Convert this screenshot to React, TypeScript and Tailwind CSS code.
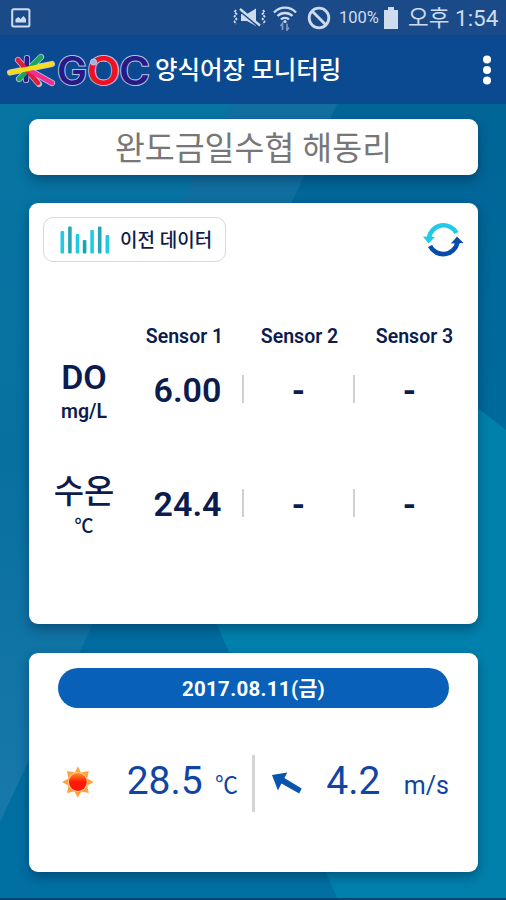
const navy = "text-[#0c1c4e]";

const bars = [
    { id: 1, x: 0, top: 5, color: "#20cbe6" },
    { id: 2, x: 7.6, top: 0.5, color: "#23a9b8" },
    { id: 3, x: 15.2, top: 8, color: "#20cbe6" },
    { id: 4, x: 22.3, top: 14, color: "#16a4b3" },
    { id: 5, x: 29.8, top: 4, color: "#20cbe6" },
    { id: 6, x: 37.4, top: 0.5, color: "#23a9b8" },
    { id: 7, x: 45, top: 9, color: "#20cbe6" }
];

const readings = [
    { id: "do", name: "DO", unit: "mg/L", values: ["6.00", "-", "-"] },
    { id: "temp", name: "수온", unit: "℃", values: ["24.4", "-", "-"] }
];

function Backdrop() {
    return (
        <svg className="absolute inset-0 -z-10" width="506" height="900" viewBox="0 0 506 900">
            <defs>
                <linearGradient id="left" x1="0" y1="0" x2="0" y2="1">
                    <stop offset="0" stopColor="#0775a3" />
                    <stop offset="0.5" stopColor="#08709f" />
                    <stop offset="1" stopColor="#1878aa" />
                </linearGradient>
                <linearGradient id="right" x1="0" y1="0" x2="0" y2="1">
                    <stop offset="0" stopColor="#006496" />
                    <stop offset="1" stopColor="#0070a3" />
                </linearGradient>
            </defs>
            <rect width="506" height="900" fill="url(#right)" />
            <path d="M0 104H337L0 822Z" fill="url(#left)" />
            <path d="M232 104H337L293 200L247 298H130Z" fill="#116fa0" />
            <path d="M478 408L506 430V900H338L217 625L160 500Z" fill="#0081ac" />
            <rect y="898" width="506" height="2" fill="#07466f" />
        </svg>
    );
}

function StatusBar() {
    return (
        <div className="flex h-[35px] items-center bg-[#1a4b88] pl-[11px] pr-2 text-[#cfdbee]">
            <svg width="20" height="20" viewBox="0 0 20 20">
                <rect x="1.2" y="1.2" width="17.2" height="17.2" rx="1.5" fill="none" stroke="currentColor" strokeWidth="2" />
                <path d="M4.5 14.5V11L7.5 9L9.5 11L12.5 8L15 11V14.5Z" fill="currentColor" />
            </svg>
            <svg className="ml-auto" width="34" height="22" viewBox="0 0 34 22">
                <path d="M3 3L1.5 5L3.5 7L1.5 9.5L3.5 12L1.5 14.5L3 17M30 3L31.5 5L29.5 7L31.5 9.5L29.5 12L31.5 14.5L30 17" fill="none" stroke="currentColor" strokeWidth="1.8" strokeDasharray="2.5 1" />
                <path d="M8 7H14L23 1.5V19L14 14H8Z" fill="currentColor" />
                <path d="M7 4L26 20" stroke="#1a4b88" strokeWidth="2" />
                <path d="M7 2L27 18.5" stroke="currentColor" strokeWidth="2.4" />
            </svg>
            <svg className="ml-[6px]" width="24" height="26" viewBox="0 0 24 26">
                <path d="M1 7.5C7 1 17 1 23 7.5M4.5 11C8.5 7 15.5 7 19.5 11M8 14.5C10 12.2 14 12.2 16 14.5" fill="none" stroke="currentColor" strokeWidth="2.3" />
                <circle cx="12" cy="16.5" r="1.6" fill="currentColor" />
                <path d="M9.5 25V18.5L7.5 21M14 18.5V25L16 22.5" fill="none" stroke="#7e9bc3" strokeWidth="1.7" />
            </svg>
            <svg className="ml-[10px]" width="24" height="24" viewBox="0 0 24 24">
                <circle cx="12" cy="12" r="9.8" fill="none" stroke="currentColor" strokeWidth="2.8" />
                <path d="M5 5L19 19" stroke="currentColor" strokeWidth="2.8" />
            </svg>
            <span className="ml-2 w-[41px] pt-[2px] text-[16.5px]">100%</span>
            <svg className="ml-[3px]" width="16" height="22" viewBox="0 0 16 22">
                <path d="M1 3H5V0H11V3H15V22H1Z" fill="currentColor" />
            </svg>
            <span className="ml-[9px] w-[90px] whitespace-nowrap pt-px text-[22.5px] leading-none">오후 1:54</span>
        </div>
    );
}

function Logo() {
    return (
        <div className="flex h-[42px] w-[143px] items-center">
            <svg width="50" height="40" viewBox="0 0 50 40" className="shrink-0">
                <g strokeLinecap="round" strokeWidth="6.2" stroke="#b9c0e2">
                    <path d="M20 8L19 30M34 7L12 29M11 10L32 34M45 33L22 20M3 22.5L45 14" />
                </g>
                <g strokeLinecap="round" strokeWidth="4.6">
                    <path d="M20 8L19 30" stroke="#2a1b86" />
                    <path d="M34 7L12 29" stroke="#1aa55a" />
                    <path d="M11 10L31 33" stroke="#e51b3c" />
                    <path d="M45 33L22 20" stroke="#ef2e92" />
                    <path d="M3 22.5L45 14" stroke="#f8dc1c" />
                </g>
            </svg>
            <svg width="93" height="42" viewBox="0 0 93 42" className="shrink-0 overflow-visible">
                <g fontFamily="Inter, sans-serif" fontSize="39" fontWeight="600" stroke="#b9bfe6" strokeWidth="2" paintOrder="stroke">
                    <text x="0" y="35.5" textLength="30" lengthAdjust="spacingAndGlyphs" fill="#261a85">G</text>
                    <text x="62" y="35.5" textLength="31" lengthAdjust="spacingAndGlyphs" fill="#261a85">C</text>
                    <text x="30" y="35.5" textLength="33" lengthAdjust="spacingAndGlyphs" fill="#f01021">O</text>
                </g>
                <circle cx="36.5" cy="13" r="3" fill="#9db2df" stroke="#c8d0ef" />
            </svg>
        </div>
    );
}

function Header() {
    return (
        <header className="flex h-[69px] items-center bg-[#0b4990] pl-[7px] pr-[14px]">
            <Logo />
            <h1 className="ml-[5px] whitespace-nowrap pt-[3px] text-[24.5px] font-medium text-white">양식어장 모니터링</h1>
            <svg className="ml-auto" width="10" height="30" viewBox="0 0 10 30" fill="#fff">
                <circle cx="5" cy="4.5" r="4" />
                <circle cx="5" cy="15" r="4" />
                <circle cx="5" cy="25.5" r="4" />
            </svg>
        </header>
    );
}

function SensorCard() {
    return (
        <section className="mt-7 h-[421px] rounded-[9px] bg-white px-[14px] pt-[14px] shadow-[0_5px_12px_rgba(0,25,60,0.4)]">
            <div className="flex justify-between">
                <button className="flex h-[45px] w-[183px] items-center rounded-[10px] border-[1.5px] border-[#d9d9dc] pl-[16px]">
                    <svg width="50" height="28" viewBox="0 0 50 28">
                        {bars.map((bar) => (
                            <rect key={bar.id} x={bar.x + 0.5} y={bar.top} width="3.6" height={27.5 - bar.top} rx="1" fill={bar.color} />
                        ))}
                    </svg>
                    <span className={`ml-[10px] whitespace-nowrap pt-[3px] text-[19px] font-medium ${navy}`}>이전 데이터</span>
                </button>
                <svg className="mt-1" width="42" height="38" viewBox="0 0 42 38">
                    <path d="M7 17A14.7 14.7 0 0 1 34.5 12" fill="none" stroke="#20cbe6" strokeWidth="4.6" />
                    <path d="M1 15.5L13 16L6.5 22.5Z" fill="#20cbe6" />
                    <path d="M8 25A14.7 14.7 0 0 0 35.5 21.5" fill="none" stroke="#084bab" strokeWidth="4.6" />
                    <path d="M29 22.5L35 15.5L41.5 22Z" fill="#084bab" />
                </svg>
            </div>

            <div className={`ml-[84px] mt-[63px] grid w-[345px] grid-cols-3 text-center text-[19.5px] font-semibold leading-6 ${navy}`}>
                <span>Sensor 1</span>
                <span>Sensor 2</span>
                <span>Sensor 3</span>
            </div>

            <div className="mt-[3px]">
                {readings.map((row) => (
                    <div key={row.id} className={`flex h-[114px] ${navy}`}>
                        <div className="w-[84px] text-center font-medium">
                            <div className={row.id === "do" ? "mt-[5px] h-10 text-[34px] font-semibold leading-10" : "mt-[6px] h-10 text-[33px] leading-10"}>{row.name}</div>
                            <div className={row.id === "do" ? "text-[19.5px] font-semibold leading-[30px]" : "text-[19px] leading-[30px]"}>{row.unit}</div>
                        </div>
                        <div className="mt-[13px] flex h-[50px] items-center">
                            <span className="w-[117px] pl-2 text-center text-[34px] font-semibold leading-none">{row.values[0]}</span>
                            <span className="mb-[2px] h-7 w-[2px] bg-[#d0d0d0]"></span>
                            <span className="flex w-[109px] justify-center text-[34px] font-bold leading-none">{row.values[1]}</span>
                            <span className="mb-[2px] h-7 w-[2px] bg-[#d0d0d0]"></span>
                            <span className="flex w-[109px] justify-center text-[34px] font-bold leading-none">{row.values[2]}</span>
                        </div>
                    </div>
                ))}
            </div>
        </section>
    );
}

function WeatherCard() {
    return (
        <section className="mt-[29px] h-[219px] rounded-[9px] bg-white px-[29px] pt-[15px] shadow-[0_5px_12px_rgba(0,25,60,0.4)]">
            <div className="flex h-10 items-center justify-center rounded-full bg-[#0860b9] pt-[2px] text-[20.5px] font-bold tracking-[0.3px] text-white">
                <span>2017.08.11(금)</span>
            </div>
            <div className="mt-[47px] flex h-[57px] items-center whitespace-nowrap text-[#1044a5]">
                <svg className="-mt-[3px] ml-1" width="32" height="32" viewBox="0 0 32 32">
                    <defs>
                        <linearGradient id="sun" x1="0" y1="0" x2="0" y2="1">
                            <stop offset="0" stopColor="#ff9022" />
                            <stop offset="0.5" stopColor="#ff1808" />
                            <stop offset="1" stopColor="#ff1a08" />
                        </linearGradient>
                    </defs>
                    <path d="M16 0L19 6.5L27 5L25.5 12.5L32 16L25.5 19.5L27 27L19.5 25.5L16 32L12.5 25.5L5 27L6.5 19.5L0 16L6.5 12.5L5 5L13 6.5Z" fill="#ffa43c" />
                    <circle cx="16" cy="16" r="10" fill="#ffc98a" />
                    <circle cx="16" cy="16" r="9" fill="url(#sun)" />
                </svg>
                <span className="-mt-[5px] ml-[33px] w-[78px] text-[39px] leading-none">28.5</span>
                <span className="ml-[11px] mt-[3px] w-[24px] text-[23px] leading-none">℃</span>
                <span className="ml-[13px] h-[57px] w-[3px] bg-[#d4d4d4]"></span>
                <svg className="ml-[16px]" width="32" height="24" viewBox="0 0 32 24">
                    <path d="M1 3L16.5 0.5L13.5 6L31 16.5L28.5 21.5L10.5 11.5L7 18.5Z" fill="#0855ad" />
                </svg>
                <span className="-mt-[5px] ml-6 w-[56px] text-[39px] leading-none">4.2</span>
                <span className="ml-[22px] mt-1 text-[25px] leading-none">m/s</span>
            </div>
        </section>
    );
}

export default function App() {
    return (
        <div className="relative isolate h-[900px] w-[506px] overflow-hidden font-['Roboto','Noto_Sans_CJK_KR',sans-serif]">
            <Backdrop />
            <StatusBar />
            <Header />
            <main className="pl-[29px] pr-[28px] pt-[15px]">
                <div className="flex h-14 items-center justify-center rounded-[9px] bg-white pt-[5px] text-[32.5px] text-[#777] shadow-[0_5px_12px_rgba(0,25,60,0.4)]">
                    <span className="whitespace-nowrap">완도금일수협 해동리</span>
                </div>
                <SensorCard />
                <WeatherCard />
            </main>
        </div>
    );
}
